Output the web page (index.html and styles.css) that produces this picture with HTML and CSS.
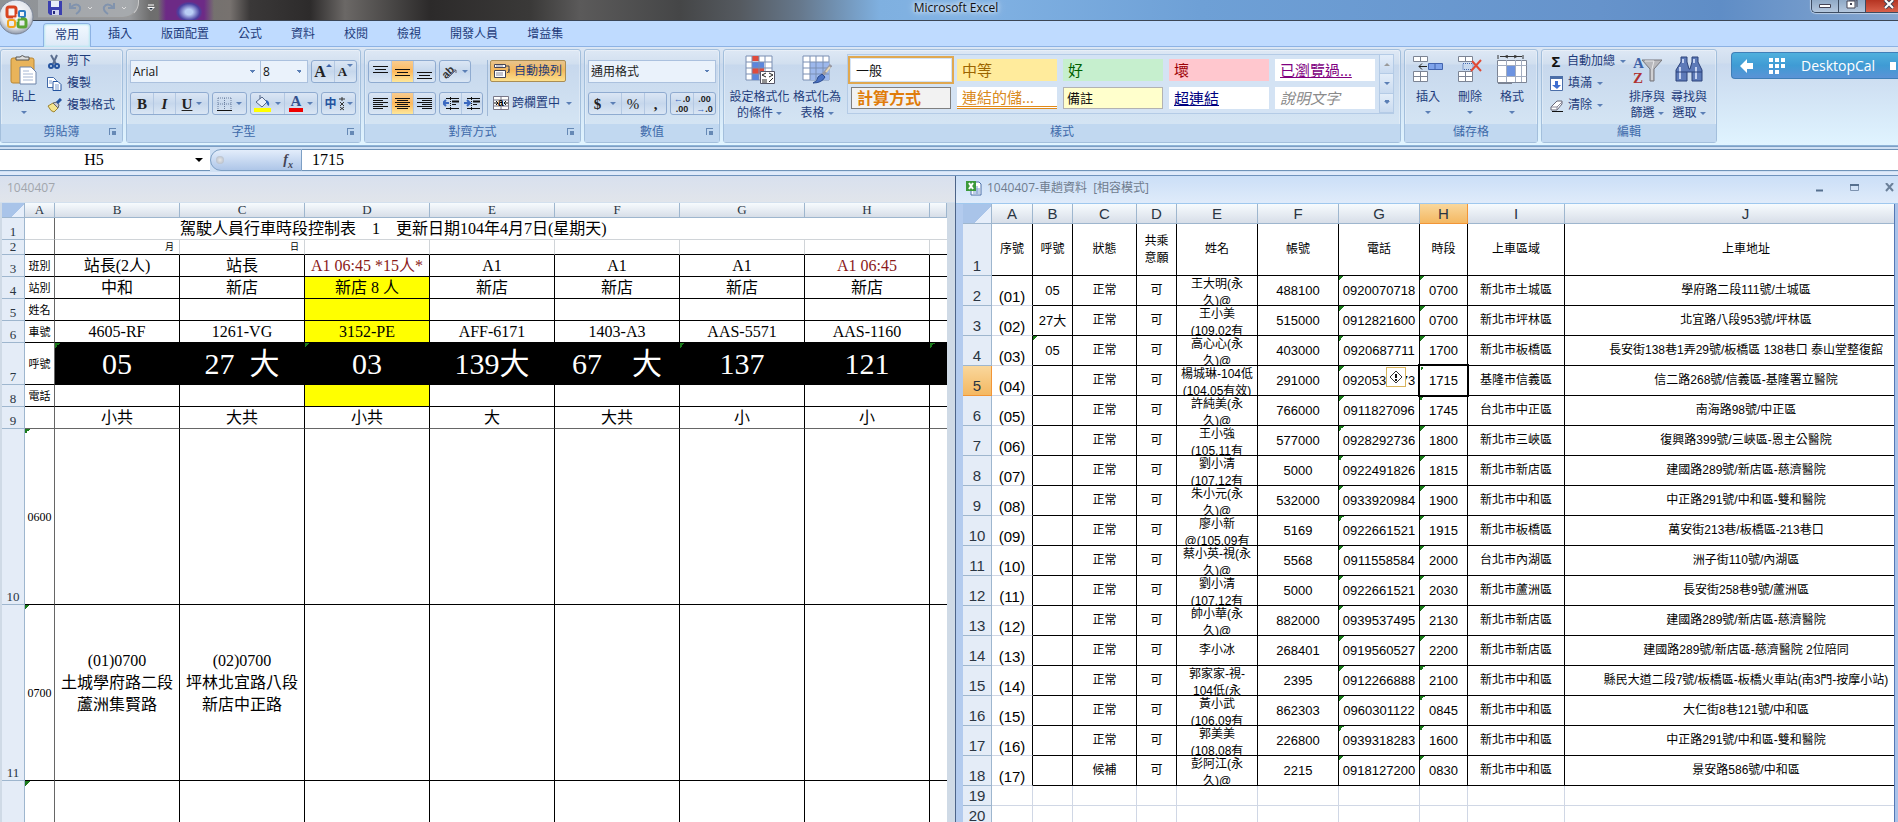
FILE: index.html
```html
<!DOCTYPE html>
<html lang="zh-Hant">
<head>
    <meta charset="UTF-8">
    <meta name="viewport" content="width=device-width, initial-scale=1.0">
    <title>Microsoft Excel</title>
    <link rel="stylesheet" href="styles.css">
</head>
<body>
    <header class="titlebar">
        <button class="orb" aria-label="Office">
            <svg width="36" height="36" viewBox="0 0 36 36">
                <defs>
                    <radialGradient id="orbBg" cx="50%" cy="40%" r="60%">
                        <stop offset="0" stop-color="#ffffff"/><stop offset="0.7" stop-color="#e3e6ec"/><stop offset="1" stop-color="#8f98a8"/>
                    </radialGradient>
                </defs>
                <circle cx="18" cy="18" r="17" fill="url(#orbBg)" stroke="#7c8698"/>
                <g fill="none">
                    <rect x="9" y="8" width="9" height="10" rx="2" stroke="#d8431f" stroke-width="3"/>
                    <rect x="21" y="12" width="6" height="6" rx="1" stroke="#2e7cc4" stroke-width="2"/>
                    <rect x="10" y="21" width="7" height="7" rx="2" stroke="#f2a51c" stroke-width="2"/>
                    <rect x="20" y="20" width="8" height="8" rx="2" stroke="#5aa534" stroke-width="3"/>
                    <path d="M15 19h8M19 15v8" stroke="#fff" stroke-width="1"/>
                </g>
            </svg>
        </button>
        <div class="quick-access">
            <button aria-label="儲存檔案">
                <svg width="14" height="14" viewBox="0 0 14 14"><path d="M0 0h14v14H2l-2-2z" fill="#3b3fb0"/><path d="M3 0h8v6H3z" fill="#e8ecfa"/><path d="M4 9h7v5H4z" fill="#cfd4ee"/><path d="M5 10h2v3H5z" fill="#25287c"/></svg>
            </button>
            <button aria-label="復原">
                <svg width="28" height="14" viewBox="0 0 28 14"><path d="M2 2v5h6M3 6q6-5 9 0 1 4-4 7" fill="none" stroke="#8193ad" stroke-width="2"/><path d="M20 6l2 2 2-2" fill="none" stroke="#ddd"/></svg>
            </button>
            <button aria-label="取消復原">
                <svg width="28" height="14" viewBox="0 0 28 14"><path d="M12 2v5H6M11 6Q5 1 2 6q-1 4 4 7" fill="none" stroke="#8193ad" stroke-width="2"/><path d="M20 6l2 2 2-2" fill="none" stroke="#ddd"/></svg>
            </button>
        </div>
        <button class="qat-more" aria-label="自訂快速存取工具列">
            <svg width="8" height="8" viewBox="0 0 8 8"><path d="M1 1h6" stroke="#fff"/><path d="M0 3h8L4 7z" fill="#fff"/><path d="M2 4h4L4 6z" fill="#234"/></svg>
        </button>
        <h1>Microsoft Excel</h1>
        <div class="window-buttons">
            <button aria-label="最小化"><svg width="12" height="9" viewBox="0 0 12 9"><path d="M.5 4.500h11v3H.5z" fill="#fff" stroke="#445"/></svg></button>
            <button aria-label="還原"><svg width="12" height="9" viewBox="0 0 12 9"><path d="M3 0h8v7" fill="none" stroke="#445"/><path d="M1 1h8v7H1z" fill="#fff" stroke="#445"/><path d="M4 3h2v2H4z" fill="#445"/></svg></button>
            <button class="close" aria-label="關閉"><svg width="12" height="9" viewBox="0 0 12 9"><path d="M2 0l8 8M10 0L2 8" stroke="#445" stroke-width="4"/><path d="M2 0l8 8M10 0L2 8" stroke="#fff" stroke-width="2"/></svg></button>
        </div>
    </header>

    <nav class="tabs">
        <button class="tab active">常用</button>
        <button class="tab">插入</button>
        <button class="tab">版面配置</button>
        <button class="tab">公式</button>
        <button class="tab">資料</button>
        <button class="tab">校閱</button>
        <button class="tab">檢視</button>
        <button class="tab">開發人員</button>
        <button class="tab">增益集</button>
    </nav>

    <div class="ribbon">
        <section class="group clipboard">
            <div class="group-body">
                <button class="large">
                    <svg width="28" height="30" viewBox="0 0 28 30"><rect x="1" y="3" width="23" height="25" rx="2" fill="#e9b45a" stroke="#b98632"/><path d="M6 5V2h4q2-3 5 0h4v3z" fill="#ddd" stroke="#555"/><path d="M10 12h11l5 5v12H10z" fill="#fff" stroke="#6d83a8"/><path d="M13 16h6M13 19h10M13 22h10M13 25h10" stroke="#a5b6d2"/></svg>
                    <span>貼上</span><i class="caret"></i>
                </button>
                <div class="stack">
                    <button class="small"><svg width="15" height="15" viewBox="0 0 15 15"><path d="M4 1l5 9M10 1L6 10" stroke="#5c6f90" stroke-width="2"/><circle cx="4" cy="12" r="2" fill="none" stroke="#24539e" stroke-width="2"/><circle cx="10" cy="12" r="2" fill="none" stroke="#24539e" stroke-width="2"/></svg>剪下</button>
                    <button class="small"><svg width="15" height="15" viewBox="0 0 15 15"><path d="M.5 1.500h6l3 3v7h-9z" fill="#fff" stroke="#4169a8"/><path d="M6 5.500h5l3 3v6H6z" fill="#fff" stroke="#24539e"/><path d="M2 5h3M2 7h3M8 9h4M8 11h4M8 13h4" stroke="#7d9cd0"/></svg>複製</button>
                    <button class="small"><svg width="15" height="15" viewBox="0 0 15 15"><path d="M1 8l5-3 5 5-4 4q-3 0-6-6z" fill="#f4e48e" stroke="#9d8432"/><path d="M6 5l4-1 2 3-1 3z" fill="#c9c9d4" stroke="#666"/><path d="M10 5l4-4" stroke="#24539e" stroke-width="3"/></svg>複製格式</button>
                </div>
            </div>
            <h2>剪貼簿<i class="launcher"></i></h2>
        </section>

        <section class="group">
            <div class="group-body rows">
                <div class="row">
                    <span class="pair">
                        <select class="combo font-name" aria-label="字型"><option>Arial</option></select>
                        <select class="combo font-size" aria-label="字型大小"><option>8</option></select>
                    </span>
                    <span class="box">
                        <button class="letter" aria-label="放大字型"><b>A</b><i class="caret up"></i></button>
                        <button class="letter tiny" aria-label="縮小字型"><b>A</b><i class="caret"></i></button>
                    </span>
                </div>
                <div class="row">
                    <span class="box">
                        <button class="letter"><b>B</b></button>
                        <button class="letter"><em>I</em></button>
                        <button class="letter wide"><u>U</u><i class="caret"></i></button>
                    </span>
                    <span class="box">
                        <button class="wide" aria-label="框線"><svg width="15" height="14" viewBox="0 0 15 14"><path d="M1 1h13M1 7h13M1 1v12M7.500 1v12M14 1v12" fill="none" stroke="#6b7f9f" stroke-dasharray="1 1"/><path d="M0 13.500h15" stroke="#111"/></svg><i class="caret"></i></button>
                    </span>
                    <span class="box">
                        <button class="wide" aria-label="填滿色彩"><svg width="17" height="17" viewBox="0 0 17 17"><path d="M2 7l6-5 5 5-5 5z" fill="#e7eefb" stroke="#56698a"/><path d="M6 4V0" stroke="#56698a"/><path d="M12 5q4 1 3 6-2-1-3-4z" fill="#2d64c0"/><path d="M0 13h17v4H0z" fill="#ff0"/></svg><i class="caret"></i></button>
                        <button class="wide font-color"><span>A</span><i class="caret"></i></button>
                    </span>
                    <span class="box">
                        <button class="wide phonetic"><b>中</b><svg width="6" height="14" viewBox="0 0 6 14"><path d="M0 2h6M3 0v4M1 5l4 4M5 5L1 9M1 10l4 3M5 10l-4 3" stroke="#333"/></svg><i class="caret"></i></button>
                    </span>
                </div>
            </div>
            <h2>字型<i class="launcher"></i></h2>
        </section>

        <section class="group">
            <div class="group-body">
                <div class="rows">
                    <div class="row">
                        <span class="box">
                            <button aria-label="靠上對齊"><svg width="15" height="14" viewBox="0 0 15 14"><path d="M0 1.500h15M2 4.500h11M0 7.500h15" stroke="#111"/></svg></button>
                            <button class="on" aria-label="置中對齊"><svg width="15" height="14" viewBox="0 0 15 14"><path d="M0 4.500h15M2 7.500h11M0 10.500h15" stroke="#111"/></svg></button>
                            <button aria-label="靠下對齊"><svg width="15" height="14" viewBox="0 0 15 14"><path d="M0 7.500h15M2 10.500h11M0 13.500h15" stroke="#111"/></svg></button>
                        </span>
                        <span class="box">
                            <button class="orient" aria-label="方向"><svg width="16" height="16" viewBox="0 0 16 16"><text x="0" y="12" transform="rotate(-45 6 9)" class="icon-ab">ab</text><path d="M6 14l8-8M14 6h-3M14 6v3" fill="none" stroke="#667"/></svg><i class="caret"></i></button>
                        </span>
                    </div>
                    <div class="row">
                        <span class="box">
                            <button aria-label="靠左對齊"><svg width="15" height="14" viewBox="0 0 15 14"><path d="M0 1.500h15M0 3.500h10M0 5.500h15M0 7.500h10M0 9.500h15M0 11.500h10" stroke="#111"/></svg></button>
                            <button class="on" aria-label="置中"><svg width="15" height="14" viewBox="0 0 15 14"><path d="M0 1.500h15M2 3.500h11M0 5.500h15M2 7.500h11M0 9.500h15M2 11.500h11" stroke="#111"/></svg></button>
                            <button aria-label="靠右對齊"><svg width="15" height="14" viewBox="0 0 15 14"><path d="M0 1.500h15M5 3.500h10M0 5.500h15M5 7.500h10M0 9.500h15M5 11.500h10" stroke="#111"/></svg></button>
                        </span>
                        <span class="box indent">
                            <button aria-label="減少縮排"><svg width="16" height="14" viewBox="0 0 16 14"><path d="M7.500 0v14" stroke="#111" stroke-dasharray="1 1"/><path d="M3 1.500h13M9 7.500h4M3 11.500h13" stroke="#111"/><path d="M9 4.500h7" stroke="#111" stroke-width="2"/><path d="M6 6H1M3 3L0 6l3 3" fill="none" stroke="#3a68c0" stroke-width="2"/></svg></button>
                            <button aria-label="增加縮排"><svg width="16" height="14" viewBox="0 0 16 14"><path d="M7.500 0v14" stroke="#111" stroke-dasharray="1 1"/><path d="M3 1.500h13M9 7.500h4M3 11.500h13" stroke="#111"/><path d="M9 4.500h7" stroke="#111" stroke-width="2"/><path d="M0 6h5M3 3l3 3-3 3" fill="none" stroke="#3a68c0" stroke-width="2"/></svg></button>
                        </span>
                    </div>
                </div>
                <div class="wrap-col">
                    <button class="small wrap-text"><svg width="17" height="16" viewBox="0 0 17 16"><path d="M.5 1.500h11v3H.5zM.5 7.500h11v7H.5z" fill="#fff" stroke="#445"/><path d="M2 3h7M2 10h7M2 12h7" stroke="#889"/><path d="M12 3h3v5l-2 2M15 10V6" fill="none" stroke="#445"/></svg>自動換列</button>
                    <button class="small"><svg width="16" height="16" viewBox="0 0 16 16"><path d="M.5 1.500h15v13H.5zM.5 5h15M.5 11h15M8 1v4M8 11v4" fill="#fff" stroke="#778"/><text x="5" y="11" class="icon-a">a</text><path d="M1 8h3M12 8h3M3 6l2 2-2 2M13 6l-2 2 2 2" fill="none" stroke="#111"/></svg>跨欄置中<i class="caret"></i></button>
                </div>
            </div>
            <h2>對齊方式<i class="launcher"></i></h2>
        </section>

        <section class="group">
            <div class="group-body rows">
                <div class="row">
                    <select class="combo number-format" aria-label="數值格式"><option>通用格式</option></select>
                </div>
                <div class="row">
                    <span class="box">
                        <button class="letter money"><b>$</b><i class="caret"></i></button>
                        <button class="letter percent">%</button>
                        <button class="letter"><b>,</b></button>
                    </span>
                    <span class="box">
                        <button class="decimal" aria-label="增加小數位數"><span><i>←</i>.0</span><span>.00</span></button>
                        <button class="decimal" aria-label="減少小數位數"><span>.00</span><span><i>→</i>.0</span></button>
                    </span>
                </div>
            </div>
            <h2>數值<i class="launcher"></i></h2>
        </section>

        <section class="group styles">
            <div class="group-body">
                <button class="large">
                    <svg width="30" height="30" viewBox="0 0 30 30"><path d="M1 1h26v24H1z" fill="#fff" stroke="#7a8fb3"/><path d="M7 1h7v5H7zM7 13h12v6H7z" fill="#e04b3c"/><path d="M7 7h12v6H7zM7 19h7v6H7z" fill="#5c86dc"/><path d="M1 7h26M1 13h26M1 19h26M7 1v24M14 1v24M20 1v24" stroke="#7a8fb3" fill="none"/><path d="M15.500 16.500h14v12h-14z" fill="#fff" stroke="#556"/><path d="M21 18l-4 2 4 2M17 25h5M17 27h5M24 18l4 2-4 2M24 27l4-4" fill="none" stroke="#222"/></svg>
                    <span>設定格式化<br>的條件<i class="caret"></i></span>
                </button>
                <button class="large">
                    <svg width="30" height="30" viewBox="0 0 30 30"><path d="M1 1h26v24H1z" fill="#fff" stroke="#7a8fb3"/><path d="M8 7h19v18H8z" fill="#9db8ec"/><path d="M1 7h26M1 13h26M1 19h26M8 1v24M14 1v24M21 1v24" stroke="#7a8fb3" fill="none"/><path d="M29 10l-9 11" stroke="#9a9aa4" stroke-width="3"/><path d="M28 12l-4 5" stroke="#e8d9b8" stroke-width="2"/><path d="M20 19l3 3q-3 6-12 6 5-2 5-6z" fill="#4a72c4" stroke="#2c4c90"/></svg>
                    <span>格式化為<br>表格<i class="caret"></i></span>
                </button>
                <div class="gallery">
                    <div class="swatches">
                        <button class="swatch normal">一般</button>
                        <button class="swatch neutral">中等</button>
                        <button class="swatch good">好</button>
                        <button class="swatch bad">壞</button>
                        <button class="swatch visited">已瀏覽過...</button>
                        <button class="swatch calc">計算方式</button>
                        <button class="swatch linked">連結的儲...</button>
                        <button class="swatch note">備註</button>
                        <button class="swatch hyper">超連結</button>
                        <button class="swatch explain">說明文字</button>
                    </div>
                    <div class="scroller">
                        <button aria-label="上一列"><i class="caret up"></i></button>
                        <button aria-label="下一列"><i class="caret"></i></button>
                        <button class="more" aria-label="其他"><i class="caret"></i></button>
                    </div>
                </div>
            </div>
            <h2>樣式</h2>
        </section>

        <section class="group cells">
            <div class="group-body">
                <button class="large">
                    <svg width="30" height="30" viewBox="0 0 30 30"><path d="M.5 1.500h14v5H.5zM7.500 1v6M.5 16.500h14v10H.5zM.5 21.500h14M7.500 16v10" fill="#fff" stroke="#7c8494"/><path d="M15.500 8.500h14v6h-14z" fill="#7fa3ea" stroke="#4264ae"/><path d="M22 8v7" stroke="#4264ae"/><path d="M6 11.500h8M9 8.500l-3 3 3 3" fill="none" stroke="#222"/></svg>
                    <span>插入</span><i class="caret"></i>
                </button>
                <button class="large">
                    <svg width="30" height="30" viewBox="0 0 30 30"><path d="M3.500 1.500h14v5h-14zM10.500 1v6M3.500 16.500h14v10h-14zM3.500 21.500h14M10.500 16v10" fill="#fff" stroke="#7c8494"/><path d="M8 8.500h10v6H8z" fill="none" stroke="#4264ae" stroke-dasharray="1 1"/><path d="M17 6l9 10M26 5l-10 11" stroke="#e04a35" stroke-width="2"/></svg>
                    <span>刪除</span><i class="caret"></i>
                </button>
                <button class="large">
                    <svg width="30" height="30" viewBox="0 0 30 30"><path d="M1 0v4M26 0v4M3 1.500h22M11 0l-3 1.500L11 3M17 0l3 1.500L17 3" fill="none" stroke="#333"/><path d="M.5 5.500h29v22H.5z" fill="#fff" stroke="#7c8494"/><path d="M9 10h9v11H9z" fill="#6d93e0"/><path d="M.5 10.500h29M.5 21.500h29M9.500 5v22M18.500 5v22M24.500 5v22" stroke="#a3adc0"/><path d="M1 28h14" stroke="#7c8494" stroke-width="2"/></svg>
                    <span>格式</span><i class="caret"></i>
                </button>
            </div>
            <h2>儲存格</h2>
        </section>

        <section class="group editing">
            <div class="group-body">
                <div class="stack">
                    <button class="small"><b class="sigma">Σ</b>自動加總<i class="caret"></i></button>
                    <button class="small"><svg width="13" height="15" viewBox="0 0 13 15"><path d="M.5.500h12v14H.5z" fill="#fff" stroke="#4b6ea8"/><path d="M0 0h13v3H0z" fill="#4b6ea8"/><path d="M5 5h3v4h3l-4 4-5-4h3z" fill="#3f6fd0"/></svg>填滿<i class="caret"></i></button>
                    <button class="small"><svg width="13" height="13" viewBox="0 0 13 13"><path d="M1 8l6-6h5v3l-5 6H1z" fill="#fff" stroke="#667"/><path d="M1 8h6l5-5M7 8v3" fill="none" stroke="#889"/><path d="M2 12.500h11" stroke="#111"/></svg>清除<i class="caret"></i></button>
                </div>
                <button class="large">
                    <svg width="30" height="30" viewBox="0 0 30 30"><text x="1" y="13" class="icon-az a">A</text><text x="1" y="28" class="icon-az z">Z</text><path d="M10 5h20l-8 9v12h-4V14z" fill="#b8b8bc" stroke="#77777c"/><path d="M13 6h9l-2 8v11" fill="none" stroke="#e8e8ea"/></svg>
                    <span>排序與<br>篩選<i class="caret"></i></span>
                </button>
                <button class="large">
                    <svg width="30" height="30" viewBox="0 0 30 30"><path d="M7 2h6v5l2 7h1l2-7V2h6v5l4 8v11H18v-9h-5v9H2V15l5-8z" fill="#5d7ab8" stroke="#2d437a"/><path d="M6 12v12M22 12v12M9 4v4M20 4v4" stroke="#c4d2f0" stroke-width="2"/><path d="M2 17h11M18 17h10" stroke="#2d437a"/></svg>
                    <span>尋找與<br>選取<i class="caret"></i></span>
                </button>
            </div>
            <h2>編輯</h2>
        </section>

        <div class="desktopcal">
            <svg width="14" height="14" viewBox="0 0 14 14"><path d="M0 7l7-7v4h6v6H7v4z" fill="#fff"/></svg>
            <svg width="17" height="17" viewBox="0 0 17 17"><path d="M0 3h16M0 9h16M0 15h10" stroke="#fff" stroke-width="4" stroke-dasharray="4 2"/></svg>
            <span>DesktopCal</span>
            <svg width="6" height="8" viewBox="0 0 6 8"><path d="M0 0h6v8H0z" fill="#fff"/></svg>
        </div>
    </div>

    <div class="formula-bar">
        <input class="name-box" aria-label="名稱方塊" value="H5">
        <button class="name-drop" aria-label="名稱清單"><i class="caret"></i></button>
        <div class="fx"><i class="knob"></i><button aria-label="插入函數">f<sub>x</sub></button></div>
        <input class="formula" aria-label="公式" value="1715">
    </div>

    <main class="workspace">
        <section class="book book-left">
            <h2 class="book-title">1040407</h2>
            <table class="sheet schedule">
                <colgroup><col class="w-head"><col class="w-a"><col span="7" class="w-day"><col></colgroup>
                <thead>
                    <tr><th class="corner"></th><th>A</th><th>B</th><th>C</th><th>D</th><th>E</th><th>F</th><th>G</th><th>H</th><th></th></tr>
                </thead>
                <tbody>
                    <tr class="plain"><th>1</th><td class="side"></td><td class="open"></td><td class="caption" colspan="7">駕駛人員行車時段控制表　1　更新日期104年4月7日(星期天)</td></tr>
                    <tr class="month"><th>2</th><td class="side"></td><td>月</td><td>日</td><td></td><td></td><td></td><td></td><td></td><td></td></tr>
                    <tr><th>3</th><td class="side">班別</td><td>站長(2人)</td><td>站長</td><td class="red">A1 06:45 *15人*</td><td>A1</td><td>A1</td><td>A1</td><td class="red">A1 06:45</td><td></td></tr>
                    <tr><th>4</th><td class="side">站別</td><td>中和</td><td>新店</td><td class="yellow">新店 8 人</td><td>新店</td><td>新店</td><td>新店</td><td>新店</td><td></td></tr>
                    <tr><th>5</th><td class="side">姓名</td><td></td><td></td><td class="yellow"></td><td></td><td></td><td></td><td></td><td></td></tr>
                    <tr><th>6</th><td class="side">車號</td><td>4605-RF</td><td>1261-VG</td><td class="yellow">3152-PE</td><td>AFF-6171</td><td>1403-A3</td><td>AAS-5571</td><td>AAS-1160</td><td></td></tr>
                    <tr class="call"><th>7</th><td class="side">呼號</td><td class="flag">05</td><td>27&nbsp; 大</td><td class="flag">03</td><td>139大</td><td>67　大</td><td class="flag">137</td><td>121</td><td class="flag"></td></tr>
                    <tr><th>8</th><td class="side">電話</td><td></td><td></td><td class="yellow"></td><td></td><td></td><td></td><td></td><td></td></tr>
                    <tr class="freeze"><th>9</th><td class="side"></td><td>小共</td><td>大共</td><td>小共</td><td>大</td><td>大共</td><td>小</td><td>小</td><td></td></tr>
                    <tr class="hour"><th>10</th><td class="side flag">0600</td><td></td><td></td><td></td><td></td><td></td><td></td><td></td><td></td></tr>
                    <tr class="hour"><th>11</th><td class="side flag">0700</td><td>(01)0700<br>土城學府路二段<br>蘆洲集賢路</td><td>(02)0700<br>坪林北宜路八段<br>新店中正路</td><td></td><td></td><td></td><td></td><td></td><td></td></tr>
                    <tr class="hour"><th></th><td class="side flag"></td><td></td><td></td><td></td><td></td><td></td><td></td><td></td><td></td></tr>
                </tbody>
            </table>
        </section>

        <section class="book book-right">
            <div class="book-bar">
                <svg width="16" height="16" viewBox="0 0 16 16"><path d="M5 2h8l2 2v11H5z" fill="#fff" stroke="#4a6ea8"/><path d="M7 9h7M7 11h7M7 13h7M11 6v8" stroke="#7d9cd0"/><path d="M0 1h10v10H0z" fill="#3c9a3c"/><path d="M3 3l4 6M7 3L3 9" stroke="#fff" stroke-width="2"/></svg>
                <h2 class="book-title">1040407-車趟資料&nbsp; [相容模式]</h2>
                <div class="book-buttons">
                    <button aria-label="最小化視窗"><svg width="9" height="9" viewBox="0 0 9 9"><path d="M1 7.500h7" stroke="#56708f" stroke-width="2"/></svg></button>
                    <button aria-label="最大化視窗"><svg width="9" height="9" viewBox="0 0 9 9"><path d="M.5 1.500h8v6h-8z" fill="none" stroke="#7d93b0"/><path d="M0 2h9" stroke="#56708f" stroke-width="2"/></svg></button>
                    <button aria-label="關閉視窗"><svg width="9" height="9" viewBox="0 0 9 9"><path d="M1 0l7 8M8 0L1 8" stroke="#6b8099" stroke-width="2"/></svg></button>
                </div>
            </div>
            <div class="book-body">
                <div class="view">
                <table class="sheet trips">
                    <colgroup><col class="w-head2"><col class="w-no"><col class="w-call"><col class="w-state"><col class="w-call"><col span="3" class="w-mid"><col class="w-time"><col class="w-area"><col></colgroup>
                    <thead>
                        <tr><th class="corner"></th><th>A</th><th>B</th><th>C</th><th>D</th><th>E</th><th>F</th><th>G</th><th class="hot">H</th><th>I</th><th>J</th></tr>
                    </thead>
                    <tbody>
                        <tr class="fields"><th>1</th><td>序號</td><td>呼號</td><td>狀態</td><td>共乘<br>意願</td><td>姓名</td><td>帳號</td><td>電話</td><td>時段</td><td>上車區域</td><td>上車地址</td></tr>
                        <tr><th>2</th><td>(01)</td><td>05</td><td>正常</td><td>可</td><td><div>王大明(永<br>久)@</div></td><td>488100</td><td>0920070718</td><td>0700</td><td>新北市土城區</td><td>學府路二段111號/土城區</td></tr>
                        <tr><th>3</th><td>(02)</td><td>27大</td><td>正常</td><td>可</td><td><div>王小美<br>(109.02有</div></td><td>515000</td><td>0912821600</td><td>0700</td><td>新北市坪林區</td><td>北宜路八段953號/坪林區</td></tr>
                        <tr><th>4</th><td>(03)</td><td class="flag">05</td><td>正常</td><td>可</td><td><div>高心心(永<br>久)@</div></td><td>403000</td><td>0920687711</td><td>1700</td><td>新北市板橋區</td><td>長安街138巷1弄29號/板橋區 138巷口 泰山堂整復館</td></tr>
                        <tr class="current"><th class="hot">5</th><td>(04)</td><td></td><td>正常</td><td>可</td><td><div>楊城琳-104低<br>(104.05有效)</div></td><td>291000</td><td>0920531873<span class="alert"><svg width="14" height="14" viewBox="0 0 14 14"><path d="M7 1l6 6-6 6-6-6z" fill="#fff" stroke="#333"/><path d="M7 4v4M7 9v2" stroke="#111" stroke-width="2"/></svg></span></td><td class="selected">1715</td><td>基隆市信義區</td><td>信二路268號/信義區-基隆署立醫院</td></tr>
                        <tr><th>6</th><td>(05)</td><td></td><td>正常</td><td>可</td><td><div>許純美(永<br>久)@</div></td><td>766000</td><td>0911827096</td><td>1745</td><td>台北市中正區</td><td>南海路98號/中正區</td></tr>
                        <tr><th>7</th><td>(06)</td><td></td><td>正常</td><td>可</td><td><div>王小強<br>(105.11有</div></td><td>577000</td><td>0928292736</td><td>1800</td><td>新北市三峽區</td><td>復興路399號/三峽區-恩主公醫院</td></tr>
                        <tr><th>8</th><td>(07)</td><td></td><td>正常</td><td>可</td><td><div>劉小清<br>(107.12有</div></td><td>5000</td><td>0922491826</td><td>1815</td><td>新北市新店區</td><td>建國路289號/新店區-慈濟醫院</td></tr>
                        <tr><th>9</th><td>(08)</td><td></td><td>正常</td><td>可</td><td><div>朱小元(永<br>久)@</div></td><td>532000</td><td>0933920984</td><td>1900</td><td>新北市中和區</td><td>中正路291號/中和區-雙和醫院</td></tr>
                        <tr><th>10</th><td>(09)</td><td></td><td>正常</td><td>可</td><td><div>廖小新<br>@(105.09有</div></td><td>5169</td><td>0922661521</td><td>1915</td><td>新北市板橋區</td><td>萬安街213巷/板橋區-213巷口</td></tr>
                        <tr><th>11</th><td>(10)</td><td></td><td>正常</td><td>可</td><td><div>蔡小英-視(永<br>久)@</div></td><td>5568</td><td>0911558584</td><td>2000</td><td>台北市內湖區</td><td>洲子街110號/內湖區</td></tr>
                        <tr><th>12</th><td>(11)</td><td></td><td>正常</td><td>可</td><td><div>劉小清<br>(107.12有</div></td><td>5000</td><td>0922661521</td><td>2030</td><td>新北市蘆洲區</td><td>長安街258巷9號/蘆洲區</td></tr>
                        <tr><th>13</th><td>(12)</td><td></td><td>正常</td><td>可</td><td><div>帥小華(永<br>久)@</div></td><td>882000</td><td>0939537495</td><td>2130</td><td>新北市新店區</td><td>建國路289號/新店區-慈濟醫院</td></tr>
                        <tr><th>14</th><td>(13)</td><td></td><td>正常</td><td>可</td><td>李小冰</td><td>268401</td><td>0919560527</td><td>2200</td><td>新北市新店區</td><td>建國路289號/新店區-慈濟醫院 2位陪同</td></tr>
                        <tr><th>15</th><td>(14)</td><td></td><td>正常</td><td>可</td><td><div>郭家家-視-<br>104低(永</div></td><td>2395</td><td>0912266888</td><td>2100</td><td>新北市中和區</td><td>縣民大道二段7號/板橋區-板橋火車站(南3門-按摩小站)</td></tr>
                        <tr><th>16</th><td>(15)</td><td></td><td>正常</td><td>可</td><td><div>黃小武<br>(106.09有</div></td><td>862303</td><td>0960301122</td><td>0845</td><td>新北市中和區</td><td>大仁街8巷121號/中和區</td></tr>
                        <tr><th>17</th><td>(16)</td><td></td><td>正常</td><td>可</td><td><div>郭美美<br>(108.08有</div></td><td>226800</td><td>0939318283</td><td>1600</td><td>新北市中和區</td><td>中正路291號/中和區-雙和醫院</td></tr>
                        <tr><th>18</th><td>(17)</td><td></td><td>候補</td><td>可</td><td><div>彭阿江(永<br>久)@</div></td><td>2215</td><td>0918127200</td><td>0830</td><td>新北市中和區</td><td>景安路586號/中和區</td></tr>
                        <tr class="empty"><th>19</th><td></td><td></td><td></td><td></td><td></td><td></td><td></td><td></td><td></td><td></td></tr>
                        <tr class="empty"><th>20</th><td></td><td></td><td></td><td></td><td></td><td></td><td></td><td></td><td></td><td></td></tr>
                    </tbody>
                </table>
                </div>
                <div class="scrollbar"></div>
            </div>
        </section>
    </main>
</body>
</html>
```

FILE: styles.css
```css
* {
    box-sizing: border-box;
}
body {
    margin: 0;
    height: 100vh;
    display: flex;
    flex-direction: column;
    overflow: hidden;
    background: #cfdcec;
    color: #1e3c7b;
    font-family: "Open Sans", "Noto Sans CJK TC", sans-serif;
    font-size: 12px;
    line-height: 16px;
}
button {
    margin: 0;
    padding: 0;
    border: 0;
    background: none;
    color: inherit;
    font: inherit;
    white-space: nowrap;
}
h1, h2 {
    margin: 0;
    font-size: 12px;
    font-weight: normal;
}
svg {
    display: block;
    flex: none;
}

/* title bar */
.titlebar {
    position: relative;
    display: flex;
    align-items: flex-start;
    height: 21px;
    border-bottom: 1px solid #3b4656;
    background:
        radial-gradient(ellipse 18px 14px at 189px 12px, #b9cdf5 20%, #4a3fa0 60%, transparent 75%),
        linear-gradient(90deg, transparent 158px, #6d2a86 166px, #6d2a86 204px, transparent 214px),
        linear-gradient(90deg, #8e9296 0, #97999c 130px, #6e6e6e 150px, #77726f 230px, #3a3838 250px, #2d2b2b 310px, #6b6866 345px, #4a4847 390px, #2c2a2a 430px, #3a3938 530px, #5b5a5a 580px, #454647 680px, #555a60 740px, #66788c 800px, #7fb0e0 880px, #82b3e4 960px, #6ea0d6 1200px, #6693cb 1600px, #5f8dc6 1720px, #86a7d0 100%);
}
.orb {
    position: absolute;
    left: -2px;
    top: -1px;
    z-index: 2;
}
.quick-access {
    display: flex;
    align-items: center;
    gap: 6px;
    height: 18px;
    margin-left: 38px;
    padding: 0 8px 2px 10px;
    border-right: 1px solid #c9c9c9;
    border-bottom: 1px solid #9a9a9a;
    border-radius: 0 0 16px 0;
    background: rgba(190, 195, 200, 0.4);
}
.qat-more {
    padding: 4px 0 0 8px;
}
.titlebar h1 {
    position: absolute;
    left: 0;
    right: 0;
    padding-left: 14px;
    text-align: center;
    color: #111;
    text-shadow: 0 0 4px #fff, 0 0 8px #fff;
}
.window-buttons {
    display: flex;
    height: 13px;
    margin-left: auto;
    border: 1px solid #3d4d63;
    border-top: 0;
    border-right: 0;
    border-radius: 0 0 0 5px;
    overflow: hidden;
    box-shadow: 0 0 1px 1px rgba(255, 255, 255, 0.5);
}
.window-buttons button {
    display: flex;
    justify-content: center;
    width: 27px;
    border-right: 1px solid #3d4d63;
    background: linear-gradient(#8fa9c6, #b4c7de);
}
.window-buttons .close {
    width: 32px;
    padding-left: 14px;
    border: 0;
    background: linear-gradient(#b53422, #d8604a);
}

/* ribbon tabs */
.tabs {
    display: flex;
    gap: 5px;
    height: 26px;
    padding: 2px 0 0 43px;
    border-bottom: 1px solid #8db2e3;
    background: #bfdbff;
}
.tab {
    height: 24px;
    padding: 0 11px 2px;
    border: 1px solid transparent;
    border-radius: 4px 4px 0 0;
}
.tab.active {
    border-color: #8db2e3;
    border-bottom: 0;
    background: linear-gradient(#f2f9ff, #dde9f7);
    box-shadow: inset 0 0 2px 1px #b7e6f0;
}

/* ribbon */
.ribbon {
    display: flex;
    gap: 3px;
    height: 99px;
    padding-top: 2px;
    background: linear-gradient(#dbe6f4 0, #cfddee 16px, #c9d9ee 17px, #e0f4ff 100%);
    border-bottom: 1px solid #8fb4d8;
}
.group {
    display: flex;
    flex-direction: column;
    height: 94px;
    border: 1px solid #a3bfdc;
    border-radius: 3px;
    background: linear-gradient(#dee8f5 0, #d1dfef 14px, #c7d8ed 15px, #d8e8f5 100%);
    box-shadow: inset 0 0 0 1px rgba(255, 255, 255, 0.3);
}
.group-body {
    display: flex;
    height: 74px;
}
.group > h2 {
    position: relative;
    height: 18px;
    background: #c1d8f0;
    color: #3e6aaa;
    text-align: center;
}
.launcher {
    position: absolute;
    right: 6px;
    top: 4px;
    width: 7px;
    height: 7px;
    border-top: 1px solid #6689b5;
    border-left: 1px solid #6689b5;
    background: linear-gradient(#6689b5, #6689b5) right bottom / 4px 4px no-repeat;
}
.caret {
    display: inline-block;
    flex: none;
    border: 3px solid transparent;
    border-top-color: #5b7fb5;
    border-bottom: 0;
}
.caret.up {
    border-top: 0;
    border-bottom: 3px solid #9a9a9a;
}
.large {
    display: flex;
    flex-direction: column;
    align-items: center;
    padding-top: 5px;
}
.large svg {
    margin-bottom: 4px;
}
.large .caret {
    margin-top: 6px;
}
.large span .caret {
    margin: 0 0 2px 3px;
}
.stack {
    display: flex;
    flex-direction: column;
    gap: 6px;
    padding-top: 3px;
}
.small {
    display: flex;
    align-items: center;
    gap: 5px;
    height: 16px;
}
.rows {
    display: flex;
    flex-direction: column;
    gap: 9px;
    padding: 10px 3px 0;
}
.row {
    display: flex;
    gap: 3px;
}
.pair {
    display: flex;
}
.box {
    display: flex;
    height: 23px;
    border: 1px solid #8fabd0;
    border-radius: 3px;
    background: linear-gradient(#dbe6f4, #c6d7ec 50%, #dae6f4);
}
.box button {
    display: flex;
    align-items: center;
    justify-content: center;
    gap: 4px;
    width: 22px;
}
.box button + button {
    border-left: 1px solid #b4c8e2;
}
.box .on {
    background: linear-gradient(#f8cc90, #fdb95c 50%, #fde79a);
}
.combo {
    height: 23px;
    padding: 0 2px;
    appearance: none;
    border: 1px solid #abc1de;
    border-radius: 0;
    background:
        conic-gradient(from 315deg at 50% 100%, #5b7fb5 90deg, transparent 0) right 5px center / 6px 3px no-repeat,
        #eaf2fb;
    color: #111;
    font: inherit;
}
.font-name {
    width: 131px;
}
.font-size {
    width: 47px;
    border-left: 0;
}
.number-format {
    width: 128px;
    color: #222;
}
.font-name, .font-size, .number-format {
    background-image: conic-gradient(from 315deg at 50% 100%, #5b7fb5 90deg, transparent 0);
}
.box .letter {
    color: #222;
    gap: 0;
    font-family: "Liberation Serif", serif;
    font-size: 15px;
}
.pair + .box .letter {
    font-size: 16px;
}
.pair + .box .tiny {
    font-size: 13px;
}
.pair + .box .caret {
    align-self: flex-start;
    margin-top: 3px;
}
.pair + .box .up {
    border-bottom-color: #3c62a8;
}
.letter em, .letter u {
    font-weight: bold;
}
.box .wide {
    width: 33px;
    gap: 4px;
}
.font-color span {
    border-bottom: 4px solid #e00;
    color: #33508c;
    padding: 0 2px;
    font-family: "Liberation Serif", serif;
    font-size: 15px;
    font-weight: bold;
    line-height: 13px;
}
.box .phonetic {
    gap: 2px;
}
.phonetic b {
    color: #24539e;
}
.box .orient {
    width: 30px;
}
.icon-ab {
    font: bold 11px "Liberation Sans", sans-serif;
    fill: #333;
}
.icon-a {
    font: bold 10px "Liberation Sans", sans-serif;
}
.box.indent button {
    width: 21px;
}
.wrap-col {
    display: flex;
    flex-direction: column;
    gap: 10px;
    height: 56px;
    margin: 10px 0 0 1px;
    padding: 0 5px 0 2px;
    border-left: 1px solid #9fb8d6;
}
.wrap-col .small {
    height: 22px;
    gap: 3px;
    padding: 0 3px;
}
.wrap-col .small .caret {
    margin-left: 3px;
}
.wrap-text {
    align-self: flex-start;
    border: 1px solid #a98d55;
    border-radius: 2px;
    background: linear-gradient(#e8c48e, #f3b75c 45%, #fde08c);
}
.box .money {
    width: 32px;
    gap: 9px;
}
.box .percent {
    width: 23px;
}
.box .decimal {
    flex-direction: column;
    gap: 0;
    color: #222;
    font-family: "Liberation Sans", sans-serif;
    font-size: 9px;
    font-weight: bold;
    line-height: 10px;
}
.decimal i {
    color: #3a68c0;
    font-style: normal;
}
.clipboard {
    width: 123px;
}
.clipboard .large {
    width: 46px;
}
.styles .large {
    width: 59px;
    margin-left: 6px;
}
.styles .large + .large {
    width: 50px;
    margin-left: 3px;
}
.cells .group-body {
    gap: 12px;
    padding: 0 9px 0 8px;
}
.cells .large {
    width: 30px;
}
.cells {
    width: 134px;
}
.editing {
    width: 176px;
}
.editing .stack {
    width: 84px;
    padding-left: 8px;
}
.editing .large {
    width: 42px;
}
.sigma {
    width: 13px;
    color: #111;
    font-size: 15px;
}
.icon-az {
    font: bold 15px "Liberation Serif", serif;
}
.icon-az.a {
    fill: #3c62a8;
}
.icon-az.z {
    fill: #b03030;
}

/* cell styles gallery */
.gallery {
    display: flex;
    height: 60px;
    margin: 4px 6px 0 5px;
    border: 1px solid #b4cbe6;
    background: #d4e3f4;
}
.swatches {
    display: grid;
    grid-template-columns: repeat(5, 100px);
    grid-auto-rows: 22px;
    gap: 6px;
    padding: 4px 4px 4px 3px;
}
.swatch {
    padding: 0 5px;
    text-align: left;
    background: #fff;
    font-size: 15px;
    line-height: 20px;
}
.normal {
    outline: 2px solid #e0a850;
    outline-offset: 1px;
    color: #111;
    font-size: 13px;
}
.neutral {
    background: #ffeb9c;
    color: #9c6500;
}
.good {
    background: #c6efce;
    color: #006100;
}
.bad {
    background: #ffc7ce;
    color: #9c0006;
}
.visited {
    color: #800080;
    text-decoration: underline;
}
.calc {
    border: 1px solid #7f7f7f;
    background: #f2f2f2;
    color: #e07c0a;
    font-size: 16px;
    font-weight: bold;
}
.linked {
    border-bottom: 3px double #e08a1a;
    color: #d98a20;
}
.note {
    padding: 0 3px;
    border: 1px solid #b2b2b2;
    background: #ffffcc;
    color: #111;
    font-size: 13px;
}
.hyper {
    color: #000080;
    text-decoration: underline;
}
.explain {
    color: #8a8a8a;
    font-style: italic;
}
.scroller {
    display: flex;
    flex-direction: column;
    width: 14px;
    border-left: 1px solid #b4cbe6;
}
.scroller button {
    display: flex;
    flex: 1;
    align-items: center;
    justify-content: center;
    border-bottom: 1px solid #b4cbe6;
    background: linear-gradient(#e3edf9, #cadbf0);
}
.scroller .more .caret {
    box-shadow: 0 -2px 0 -1px #5b7fb5;
}

/* desktop widget docked over the ribbon */
.desktopcal {
    display: flex;
    align-items: center;
    gap: 15px;
    width: 167px;
    height: 27px;
    margin: 3px 0 0 auto;
    padding-left: 8px;
    border: 1px solid #3f7fb8;
    border-right: 0;
    border-radius: 4px 0 0 4px;
    background: linear-gradient(#4fb0dd, #3f9bd4 50%, #5b93d6);
    color: #fff;
    font-size: 14px;
    overflow: hidden;
}

/* formula bar */
.formula-bar {
    display: flex;
    height: 30px;
    padding: 2px 0 4px;
    border-top: 1px solid #7d9fc4;
    border-bottom: 1px solid #6f93bd;
    background: #cfe0f4;
    box-shadow: inset 0 -3px 0 #dfeafa;
}
.formula-bar input {
    min-width: 0;
    border: solid #6f93b8;
    border-width: 1px 0;
    background: #fff;
    color: #000;
    font-family: "Liberation Serif", serif;
    font-size: 16px;
}
.name-box {
    width: 188px;
    padding: 0;
    text-align: center;
}
.name-drop {
    display: flex;
    align-items: center;
    justify-content: center;
    width: 22px;
    border: solid #6f93b8;
    border-width: 1px 0;
    background: #fff;
}
.name-drop .caret {
    border-width: 4px 4px 0;
    border-top-color: #000;
}
.fx {
    display: flex;
    align-items: center;
    justify-content: space-between;
    width: 92px;
    padding: 0 8px 0 5px;
    border: 1px solid #7d9fc4;
    border-radius: 12px 0 0 12px;
    background: linear-gradient(#e3edfb, #aec6e8);
}
.fx button {
    color: #445;
    font-family: "Liberation Serif", serif;
    font-size: 14px;
    font-weight: bold;
    font-style: italic;
}
.fx sub {
    font-size: 10px;
    line-height: 8px;
}
.knob {
    width: 8px;
    height: 8px;
    border-radius: 50%;
    background: radial-gradient(#e6e6e6, #a9b4c4);
}
.formula {
    flex: 1;
    padding: 0 10px;
}

/* workbook windows */
.workspace {
    display: flex;
    flex: 1;
    min-height: 0;
}
.book {
    min-width: 0;
    overflow: hidden;
}
.book-left {
    flex: 945;
    padding: 0 8px 0 2px;
    background: #cfdae6;
}
.book-left .book-title {
    height: 27px;
    margin: 0 -8px 0 -2px;
    padding: 4px 7px 0;
    border-bottom: 1px solid #d3e0ee;
    background: linear-gradient(#d8e0ee, #e1e5eb);
    color: #a2a6ac;
}
.book-right {
    flex: 942;
    display: flex;
    flex-direction: column;
    border-left: 1px solid #4c6488;
}
.book-bar {
    display: flex;
    align-items: center;
    gap: 5px;
    height: 28px;
    padding: 0 4px 4px 10px;
    border-bottom: 1px solid #9fc8ee;
    background: linear-gradient(#cbdff7, #dfebfa);
}
.book-bar .book-title {
    color: #6f7c8e;
}
.book-buttons {
    display: flex;
    gap: 26px;
    margin-left: auto;
}
.book-body {
    display: flex;
    flex: 1;
    min-height: 0;
    padding-left: 7px;
    background: #b3cbee;
}
.view {
    flex: 1;
    min-width: 0;
    overflow: hidden;
    background: #fff;
}
.scrollbar {
    flex: none;
    width: 4px;
    border-left: 1px solid #5578b4;
    background: #a9c3ea;
}

/* sheets */
.sheet {
    width: 100%;
    table-layout: fixed;
    border-spacing: 0;
    background: #fff;
    color: #000;
}
.sheet th {
    padding: 0;
    border-right: 1px solid #9eb6ce;
    border-bottom: 1px solid #9eb6ce;
    background: #e4ecf7;
    color: #2a3542;
    font-weight: normal;
    vertical-align: bottom;
}
.sheet thead th {
    background: linear-gradient(#f7fbfe, #d7dee8);
    vertical-align: middle;
}
.sheet thead .corner {
    background: linear-gradient(135deg, #a9c4e9 65%, #e6eefa 65%);
}
.sheet td {
    padding: 0;
    border-right: 1px solid #000;
    border-bottom: 1px solid #000;
    text-align: center;
    white-space: nowrap;
}
.sheet .flag {
    background-image: linear-gradient(135deg, #1b7a1b 50%, transparent 50%);
    background-size: 5px 5px;
    background-repeat: no-repeat;
}

/* driver schedule */
.w-head {
    width: 23px;
}
.w-a {
    width: 30px;
}
.w-day {
    width: 125px;
}
.schedule {
    font-family: "Liberation Serif", "Noto Sans CJK TC", serif;
    font-size: 16px;
    line-height: 20px;
}
.schedule th {
    font-size: 13px;
    line-height: 14px;
}
.schedule thead th {
    height: 15px;
}
.schedule tbody tr {
    height: 22px;
}
.schedule td:last-child {
    border-right: 0;
}
.schedule .side {
    border-right-color: #666;
    font-size: 11px;
}
.schedule .plain td {
    border-color: #d0d4d8;
}
.schedule .plain .open {
    border-right: 0;
}
.schedule .caption {
    text-align: left;
}
.schedule .plain .side, .schedule .month .side {
    border-right-color: #666;
}
.schedule tbody .month {
    height: 15px;
}
.schedule .month td {
    padding-right: 5px;
    border-right-color: #d0d4d8;
    text-align: right;
    font-size: 9px;
    line-height: 14px;
}
.red {
    color: #8b1a1a;
}
.yellow {
    background: #ff0;
}
.schedule tbody .call {
    height: 42px;
}
.call td:not(.side) {
    background-color: #000;
    color: #fff;
    font-size: 30px;
    line-height: 40px;
}
.freeze td {
    border-bottom-color: #666;
}
.schedule tbody .hour {
    height: 176px;
}
.schedule .hour td {
    padding-bottom: 20px;
    line-height: 22px;
}
.schedule .hour .side {
    padding: 0;
    font-size: 12px;
}

/* trip list, the last column runs on past the window edge */
.w-head2 {
    width: 29px;
}
.w-no {
    width: 41px;
}
.w-call {
    width: 40px;
}
.w-state {
    width: 64px;
}
.w-mid {
    width: 81px;
}
.w-time {
    width: 48px;
}
.w-area {
    width: 97px;
}
.trips {
    width: calc(100% + 33px);
    font-family: "Liberation Sans", "Noto Sans CJK TC", sans-serif;
    font-size: 12px;
    line-height: 17px;
}
.trips th {
    font-size: 15px;
    line-height: 18px;
}
.trips thead th {
    height: 20px;
}
.trips tbody tr {
    height: 30px;
}
.trips td:nth-child(3), .trips td:nth-child(7), .trips td:nth-child(8), .trips td:nth-child(9) {
    font-size: 13px;
}
.trips td:nth-child(2) {
    border-bottom-color: #d0d7e5;
    font-size: 15px;
    vertical-align: bottom;
}
.trips td:nth-child(6) div {
    height: 29px;
    overflow: hidden;
}
.trips td:nth-child(8), .trips td:nth-child(9) {
    background: linear-gradient(135deg, #1b7a1b 50%, transparent 50%) left top / 5px 5px no-repeat;
}
.trips td:last-child {
    border-right: 0;
}
.trips tbody .fields {
    height: 52px;
}
.trips .fields td {
    background: none;
    border-bottom-color: #000;
    font-size: 12px;
    vertical-align: middle;
}
.trips tbody .empty {
    height: 20px;
}
.trips .empty td {
    background: none;
    border-color: #d0d7e5;
}
.sheet .hot {
    border-color: #f29536;
    background: linear-gradient(#f9d79c, #f4b862);
}
.current td {
    position: relative;
}
.selected::after {
    content: "";
    position: absolute;
    inset: -2px;
    border: 2px solid #000;
    outline: 1px solid #fff;
    outline-offset: -3px;
}
.alert {
    position: absolute;
    right: 13px;
    top: 1px;
    display: flex;
    align-items: center;
    justify-content: center;
    width: 20px;
    height: 20px;
    border: 1px solid #d9b45c;
    background: #fff;
}
```
